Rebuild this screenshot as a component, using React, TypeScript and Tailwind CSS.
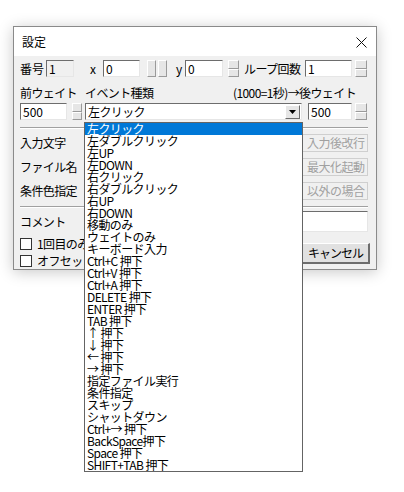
import React from "react";

const font = { fontFamily: '"Noto Sans CJK JP", "Noto Sans", sans-serif' };

function Box({ w, value, disabled }: { w: string; value?: string; disabled?: boolean }) {
  return (
    <div
      className={`${w} h-[17px] shrink-0 border-t border-l border-t-[#6d6d6d] border-l-[#6d6d6d] border-b border-r border-b-[#e6e6e6] border-r-[#e6e6e6] ${
        disabled ? "bg-[#f0f0f0]" : "bg-white"
      } flex items-center pl-[2px] text-[12px] leading-[12px] text-black`}
    >
      {value}
    </div>
  );
}

function Half({ cls }: { cls: string }) {
  return (
    <div
      className={`${cls} bg-[#e6e6e6] border-t border-l border-t-white border-l-white border-b border-r border-b-[#9a9a9a] border-r-[#9a9a9a]`}
    />
  );
}

function Spin({ w, ml }: { w: string; ml: string }) {
  return (
    <div className={`${w} ${ml} h-[17px] shrink-0 flex flex-col`}>
      <Half cls="flex-1" />
      <Half cls="flex-1" />
    </div>
  );
}

function Sep({ cls }: { cls: string }) {
  return (
    <div className={`${cls} h-[2px] border-t border-t-[#a0a0a0] border-b border-b-white`} />
  );
}

const items = [
  "左クリック",
  "左ダブルクリック",
  "左UP",
  "左DOWN",
  "右クリック",
  "右ダブルクリック",
  "右UP",
  "右DOWN",
  "移動のみ",
  "ウェイトのみ",
  "キーボード入力",
  "Ctrl+C 押下",
  "Ctrl+V 押下",
  "Ctrl+A 押下",
  "DELETE 押下",
  "ENTER 押下",
  "TAB 押下",
  "↑ 押下",
  "↓ 押下",
  "← 押下",
  "→ 押下",
  "指定ファイル実行",
  "条件指定",
  "スキップ",
  "シャットダウン",
  "Ctrl+→ 押下",
  "BackSpace押下",
  "Space 押下",
  "SHIFT+TAB 押下",
];

function SideBtn({ label }: { label: string }) {
  return (
    <div className="ml-auto w-[80px] h-[18px] bg-[#f0f0f0] border border-[#cfcfcf] flex items-center pl-[18px] text-[12px] leading-[12px] text-[#a0a0a0] whitespace-nowrap tracking-[-0.5px]">
      {label}
    </div>
  );
}

export default function App() {
  return (
    <div className="w-[404px] h-[492px] bg-white relative overflow-hidden text-black" style={font}>
      <div className="pt-[26px] pl-[13px]">
        <div className="w-[364px] h-[244px] border border-[#8a8a8a] bg-[#f0f0f0] shadow-[0_2px_14px_rgba(0,0,0,0.22)] flex flex-col">
          {/* title bar */}
          <div className="h-[29px] bg-white flex items-center justify-between pl-[8px] pr-[9px] shrink-0">
            <span className="text-[12px] leading-[12px]">設定</span>
            <svg width="11" height="11" viewBox="0 0 11 11" className="mt-[1px]">
              <path d="M0.5 0.5 L10.5 10.5 M10.5 0.5 L0.5 10.5" stroke="#111" strokeWidth="1" />
            </svg>
          </div>
          {/* body */}
          <div className="flex-1 pl-[6px] text-[12px] leading-[12px]">
            {/* row 1 */}
            <div className="mt-[4px] h-[17px] flex items-center">
              <span className="w-[26px] shrink-0">番号</span>
              <Box w="w-[28px]" value="1" disabled />
              <span className="w-[29px] pl-[16px] shrink-0">x</span>
              <Box w="w-[37px]" value="0" />
              <div className="ml-[7px] h-[17px] flex gap-[2px] shrink-0">
                <Half cls="w-[9px] h-[17px]" />
                <Half cls="w-[9px] h-[17px]" />
              </div>
              <span className="w-[18px] pl-[9px] shrink-0">y</span>
              <Box w="w-[38px]" value="0" />
              <Spin w="w-[11px]" ml="ml-[5px]" />
              <span className="w-[66px] pl-[5px] shrink-0 whitespace-nowrap tracking-[-0.6px]">ループ回数</span>
              <Box w="w-[47px]" value="1" />
              <Spin w="w-[12px]" ml="ml-[3px]" />
            </div>
            {/* row 2 */}
            <div className="mt-[9px] h-[14px] flex items-center whitespace-nowrap">
              <span className="w-[65px] shrink-0 tracking-[-0.6px]">前ウェイト</span>
              <span className="w-[148px] shrink-0 tracking-[-0.6px]">イベント種類</span>
              <span className="tracking-[-0.6px]">(1000=1秒)→後ウェイト</span>
            </div>
            {/* row 3 */}
            <div className="mt-[3px] h-[17px] flex items-center">
              <Box w="w-[47px]" value="500" />
              <Spin w="w-[10px]" ml="ml-[5px]" />
              <div className="ml-[3px] w-[217px] h-[17px] shrink-0 bg-white border-t border-l border-t-[#6d6d6d] border-l-[#6d6d6d] border-b border-r border-b-[#e6e6e6] border-r-[#e6e6e6] flex items-center justify-between pl-[2px] pr-[1px]">
                <span className="tracking-[-0.6px]">左クリック</span>
                <div className="w-[15px] h-[14px] bg-[#e6e6e6] border-t border-l border-t-white border-l-white border-b border-r border-b-[#6d6d6d] border-r-[#6d6d6d] flex items-center justify-center">
                  <svg width="7" height="4" viewBox="0 0 7 4">
                    <path d="M0 0 H7 L3.5 4 Z" fill="#000" />
                  </svg>
                </div>
              </div>
              <div className="ml-[6px]">
                <Box w="w-[44px]" value="500" />
              </div>
              <Spin w="w-[12px]" ml="ml-[3px]" />
            </div>
            <Sep cls="mt-[7px] w-[348px]" />
            {/* label rows */}
            <div className="mt-[5px] flex flex-col gap-[6px] w-[348px]">
              <div className="h-[18px] flex items-center">
                <span className="tracking-[-0.6px]">入力文字</span>
                <SideBtn label="入力後改行" />
              </div>
              <div className="h-[18px] flex items-center">
                <span className="tracking-[-0.6px]">ファイル名</span>
                <SideBtn label="最大化起動" />
              </div>
              <div className="h-[18px] flex items-center">
                <span className="tracking-[-0.6px]">条件色指定</span>
                <SideBtn label="以外の場合" />
              </div>
            </div>
            <Sep cls="mt-[6px] w-[348px]" />
            <div className="mt-[3px] h-[21px] w-[348px] flex items-center">
              <span className="tracking-[-0.6px]">コメント</span>
              <div className="ml-auto w-[280px] h-[21px] bg-white border-t border-l border-t-[#6d6d6d] border-l-[#6d6d6d] border-b border-r border-b-[#e6e6e6] border-r-[#e6e6e6]" />
            </div>
            <div className="mt-[3px] w-[350px] flex">
              <div className="flex flex-col gap-[4px] pt-[2px]">
                <div className="h-[13px] flex items-center gap-[5px]">
                  <div className="w-[12px] h-[12px] bg-white border border-[#333]" />
                  <span className="whitespace-nowrap tracking-[-0.6px]">1回目のみ実行</span>
                </div>
                <div className="h-[13px] flex items-center gap-[5px]">
                  <div className="w-[12px] h-[12px] bg-white border border-[#333]" />
                  <span className="whitespace-nowrap tracking-[-0.6px]">オフセット指定</span>
                </div>
              </div>
              <div className="ml-auto mt-[8px] w-[80px] h-[21px] bg-[#e1e1e1] border-t border-l border-t-white border-l-white border-b-2 border-r-2 border-b-[#6d6d6d] border-r-[#6d6d6d] flex items-center pl-[17px] tracking-[-1px] whitespace-nowrap">
                キャンセル
              </div>
            </div>
          </div>
        </div>
      </div>

      {/* dropdown list overlay */}
      <div className="absolute left-[84px] top-[122px] w-[219px] bg-white border border-[#646464] flex flex-col">
        {items.map((t, i) => (
          <div
            key={i}
            className={`h-[12px] pl-[2px] text-[12px] leading-[12px] whitespace-nowrap tracking-[-0.6px] ${
              i === 0 ? "bg-[#0078d7] text-white" : "text-black"
            }`}
          >
            {t}
          </div>
        ))}
      </div>
    </div>
  );
}
